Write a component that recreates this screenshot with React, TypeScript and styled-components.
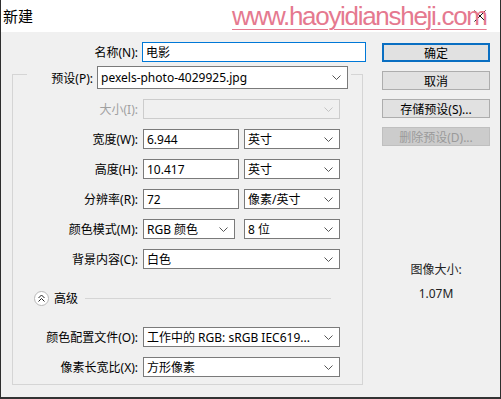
import React from "react";
import styled, { createGlobalStyle } from "styled-components";

const GlobalStyle = createGlobalStyle`
  html, body {
    margin: 0;
    padding: 0;
    background: #fff;
  }

  body {
    font-family: "Noto Sans", "Noto Sans CJK SC", sans-serif;
    font-size: 12px;
    color: #000;
  }
`;

const Window = styled.div`
  position: relative;
  width: 501px;
  height: 399px;
  box-sizing: border-box;
  display: flex;
  flex-direction: column;
  background: #f0f0f0;
  border-left: 1px solid #2e2e2e;
  border-right: 1px solid #2e2e2e;
  border-bottom: 2px solid #333;
  overflow: hidden;
`;

const TitleBar = styled.div`
  height: 32px;
  flex-shrink: 0;
  display: flex;
  align-items: center;
  padding-left: 2px;
  background: #fff;
`;

const Title = styled.span`
  font-size: 15px;
  line-height: 32px;
`;

const CloseButton = styled.div`
  margin-left: auto;
  margin-right: 14px;
  display: flex;
`;

const Watermark = styled.div`
  position: absolute;
  top: 0;
  left: 231px;
  font-family: "Liberation Sans", Arial, sans-serif;
  font-size: 26px;
  line-height: 32px;
  letter-spacing: -1.3px;
  color: #e5798f;
  text-decoration: underline;
  text-decoration-thickness: 1px;
  text-underline-offset: 4px;
  pointer-events: none;
`;

const Content = styled.div`
  display: flex;
  padding: 10px 0 0 11px;
`;

const LeftColumn = styled.div`
  width: 355px;
  display: flex;
  flex-direction: column;
`;

const NameRow = styled.div`
  display: flex;
  align-items: center;
  gap: 4px;
`;

const Label = styled.span<{ $w: number; $disabled?: boolean }>`
  width: ${(p) => p.$w}px;
  flex-shrink: 0;
  text-align: right;
  white-space: nowrap;
  color: ${(p) => (p.$disabled ? "#a0a0a0" : "#000")};
`;

const TextInput = styled.input<{ $w: number; $focused?: boolean }>`
  width: ${(p) => p.$w}px;
  height: 20px;
  box-sizing: border-box;
  margin: 0;
  padding: 0 3px;
  border: 1px solid ${(p) => (p.$focused ? "#0078d7" : "#7a7a7a")};
  background: #fff;
  font: inherit;
  color: #000;
  outline: none;
`;

const SelectBox = styled.div<{ $w: number; $h?: number; $disabled?: boolean }>`
  width: ${(p) => p.$w}px;
  height: ${(p) => p.$h ?? 20}px;
  box-sizing: border-box;
  display: flex;
  align-items: center;
  padding-left: 3px;
  border: 1px solid ${(p) => (p.$disabled ? "#cccccc" : "#7a7a7a")};
  background: ${(p) => (p.$disabled ? "#f0f0f0" : "#fff")};
  white-space: nowrap;
`;

const SelectText = styled.span`
  flex: 1;
  overflow: hidden;
`;

const Chevron = styled.svg<{ $disabled?: boolean }>`
  flex-shrink: 0;
  margin: 0 6px 0 4px;
  stroke: ${(p) => (p.$disabled ? "#c4c4c4" : "#555")};
`;

const GroupBox = styled.fieldset`
  width: 351px;
  box-sizing: border-box;
  min-width: 0;
  margin: -2px 0 0 0;
  padding: 0 0 7px 0;
  border: 1px solid #d5d5d5;
`;

const GroupLegend = styled.legend`
  margin-left: 14px;
  padding: 6px 3px 0 3px;
`;

const LegendInner = styled.div`
  display: flex;
  align-items: center;
  gap: 4px;
`;

const FieldList = styled.div`
  display: flex;
  flex-direction: column;
  gap: 10px;
  padding-top: 10px;
`;

const FieldRow = styled.div<{ $spaced?: boolean }>`
  display: flex;
  align-items: center;
  height: 20px;
  margin-top: ${(p) => (p.$spaced ? 11 : 0)}px;
`;

const Controls = styled.div<{ $gap?: number }>`
  display: flex;
  gap: ${(p) => p.$gap ?? 5}px;
  margin-left: 5px;
`;

const AdvancedRow = styled.div`
  display: flex;
  align-items: center;
  height: 16px;
  margin-top: 11px;
  padding-left: 21px;
`;

const ToggleCircle = styled.div`
  width: 15px;
  height: 15px;
  box-sizing: border-box;
  border: 1px solid #b8b8b8;
  border-radius: 50%;
  background: #fff;
  display: flex;
  align-items: center;
  justify-content: center;
`;

const AdvancedText = styled.span`
  margin-left: 5px;
`;

const Rule = styled.div`
  flex: 1;
  height: 1px;
  margin: 0 31px 0 7px;
  background: #d5d5d5;
`;

const RightColumn = styled.div`
  width: 108px;
  margin-left: 15px;
  padding-top: 1px;
  display: flex;
  flex-direction: column;
  gap: 9px;
`;

const Button = styled.div<{ $primary?: boolean; $disabled?: boolean }>`
  height: 19px;
  box-sizing: border-box;
  display: flex;
  align-items: center;
  justify-content: center;
  background: ${(p) => (p.$disabled ? "#cccccc" : "#e1e1e1")};
  border: ${(p) =>
    p.$primary ? "2px solid #0a6fc2" : `1px solid ${p.$disabled ? "#bfbfbf" : "#adadad"}`};
  color: ${(p) => (p.$disabled ? "#9a9a9a" : "#000")};
  white-space: nowrap;
`;

const ImageSize = styled.div`
  margin-top: 103px;
  text-align: center;
  line-height: 24px;
  color: #222;
`;

const ChevronDown = ({ disabled }: { disabled?: boolean }) => (
  <Chevron $disabled={disabled} width="9" height="5" viewBox="0 0 9 5" fill="none">
    <polyline points="0.5,0.5 4.5,4.5 8.5,0.5" strokeWidth="1" />
  </Chevron>
);

const Select: React.FC<{ w: number; h?: number; disabled?: boolean; children?: React.ReactNode }> = ({
  w,
  h,
  disabled,
  children,
}) => (
  <SelectBox $w={w} $h={h} $disabled={disabled}>
    <SelectText>{children}</SelectText>
    <ChevronDown disabled={disabled} />
  </SelectBox>
);

export default function App() {
  return (
    <>
      <GlobalStyle />
      <Window>
        <TitleBar>
          <Title>新建</Title>
          <CloseButton>
            <svg width="12" height="12" viewBox="0 0 12 12" stroke="#111" strokeWidth="1">
              <line x1="0.5" y1="0.5" x2="11.5" y2="11.5" />
              <line x1="11.5" y1="0.5" x2="0.5" y2="11.5" />
            </svg>
          </CloseButton>
        </TitleBar>
        <Watermark>www.haoyidiansheji.com</Watermark>

        <Content>
          <LeftColumn>
            <NameRow>
              <Label $w={126}>名称(N):</Label>
              <TextInput $w={224} $focused readOnly value="电影" />
            </NameRow>

            <GroupBox>
              <GroupLegend>
                <LegendInner>
                  <Label $w={63}>预设(P):</Label>
                  <Select w={251} h={23}>
                    pexels-photo-4029925.jpg
                  </Select>
                </LegendInner>
              </GroupLegend>

              <FieldList>
                <FieldRow>
                  <Label $w={125} $disabled>
                    大小(I):
                  </Label>
                  <Controls>
                    <Select w={197} disabled />
                  </Controls>
                </FieldRow>
                <FieldRow>
                  <Label $w={125}>宽度(W):</Label>
                  <Controls>
                    <TextInput $w={96} readOnly value="6.944" />
                    <Select w={96}>英寸</Select>
                  </Controls>
                </FieldRow>
                <FieldRow>
                  <Label $w={125}>高度(H):</Label>
                  <Controls>
                    <TextInput $w={96} readOnly value="10.417" />
                    <Select w={96}>英寸</Select>
                  </Controls>
                </FieldRow>
                <FieldRow>
                  <Label $w={125}>分辨率(R):</Label>
                  <Controls>
                    <TextInput $w={96} readOnly value="72" />
                    <Select w={96}>像素/英寸</Select>
                  </Controls>
                </FieldRow>
                <FieldRow>
                  <Label $w={125}>颜色模式(M):</Label>
                  <Controls $gap={9}>
                    <Select w={92}>RGB 颜色</Select>
                    <Select w={96}>8 位</Select>
                  </Controls>
                </FieldRow>
                <FieldRow>
                  <Label $w={125}>背景内容(C):</Label>
                  <Controls>
                    <Select w={197}>白色</Select>
                  </Controls>
                </FieldRow>

                <AdvancedRow>
                  <ToggleCircle>
                    <svg width="7" height="8" viewBox="0 0 7 8" fill="none" stroke="#222" strokeWidth="1">
                      <polyline points="0.5,4 3.5,1 6.5,4" />
                      <polyline points="0.5,7.5 3.5,4.5 6.5,7.5" />
                    </svg>
                  </ToggleCircle>
                  <AdvancedText>高级</AdvancedText>
                  <Rule />
                </AdvancedRow>

                <FieldRow $spaced>
                  <Label $w={125}>颜色配置文件(O):</Label>
                  <Controls>
                    <Select w={197}>工作中的 RGB: sRGB IEC619...</Select>
                  </Controls>
                </FieldRow>
                <FieldRow>
                  <Label $w={125}>像素长宽比(X):</Label>
                  <Controls>
                    <Select w={197}>方形像素</Select>
                  </Controls>
                </FieldRow>
              </FieldList>
            </GroupBox>
          </LeftColumn>

          <RightColumn>
            <Button $primary>确定</Button>
            <Button>取消</Button>
            <Button>存储预设(S)...</Button>
            <Button $disabled>删除预设(D)...</Button>
            <ImageSize>
              <div>图像大小:</div>
              <div>1.07M</div>
            </ImageSize>
          </RightColumn>
        </Content>
      </Window>
    </>
  );
}
